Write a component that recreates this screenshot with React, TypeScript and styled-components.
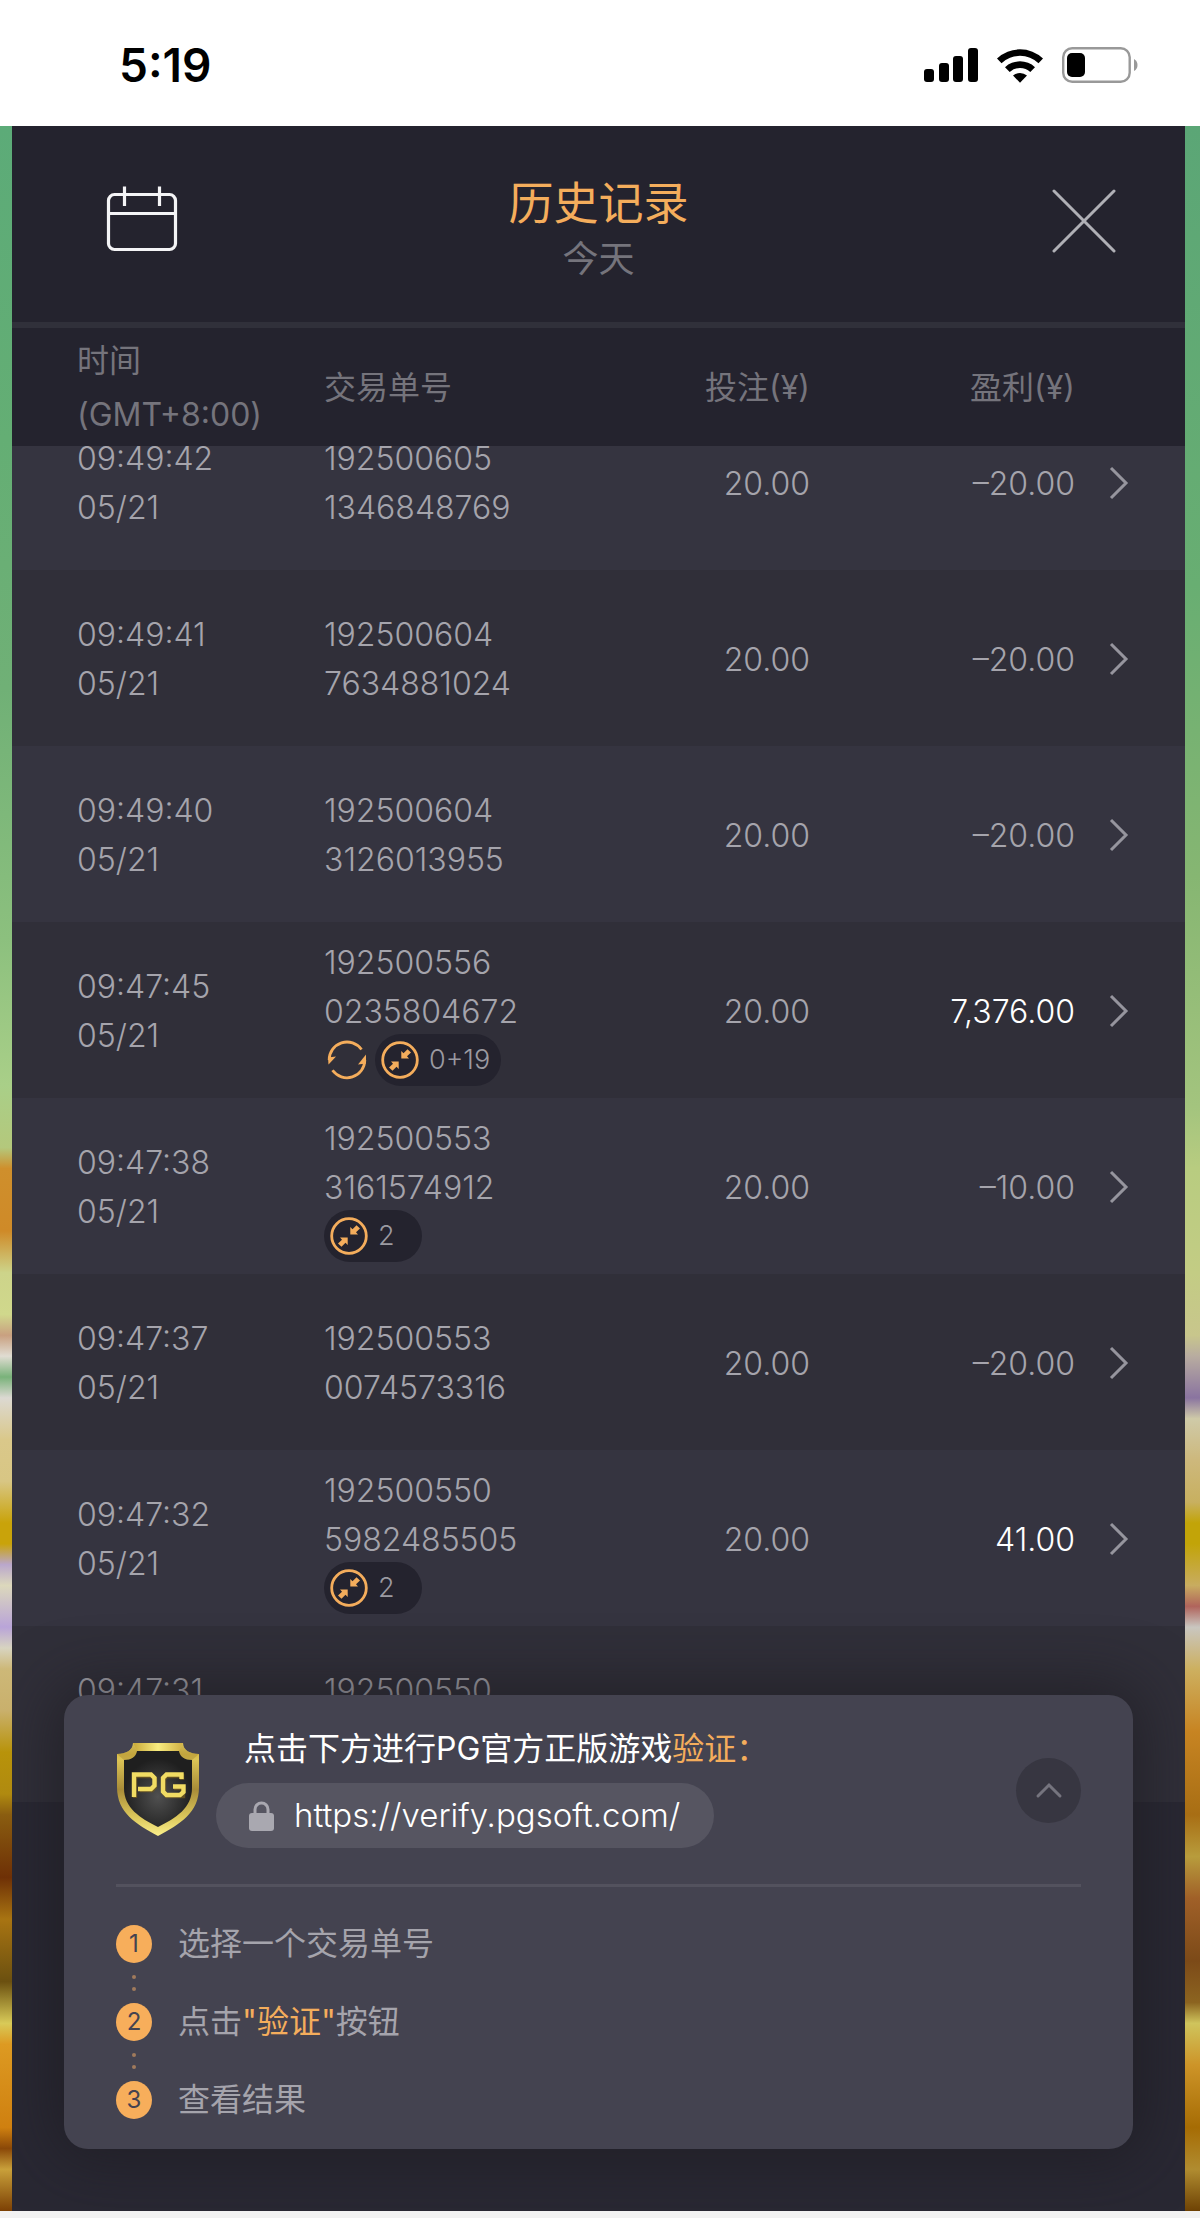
import React from "react";
import styled, { createGlobalStyle } from "styled-components";

const sans = `Inter, "Noto Sans CJK SC", sans-serif`;

const Global = createGlobalStyle`
  * { box-sizing: border-box; }
  body { margin: 0; background: #f2f2f2; font-family: ${sans}; font-weight: 350; color: #a5a4ac; }
  button { font: inherit; color: inherit; border: 0; padding: 0; margin: 0; background: none; display: flex; cursor: pointer; }
  svg { display: block; flex: none; }
`;

const Page = styled.div`
  min-height: 100vh;
  display: flex;
  flex-direction: column;
  padding-bottom: 7px;
`;

const StatusBar = styled.div`
  background: #fff;
  height: 126px;
  display: flex;
  align-items: center;
  justify-content: space-between;
  padding: 4px 62px 0 119px;
`;

const Clock = styled.time`
  color: #000;
  font-size: 46px;
  font-weight: 600;
  line-height: 56px;
`;

const StatusIcons = styled.div`
  display: flex;
  align-items: center;
  gap: 18px;
`;

const Backdrop = styled.div`
  flex: 1;
  display: flex;
  padding: 0 15px 0 12px;
  background:
    linear-gradient(180deg,
      #5cab78 0%, #64ae74 15%, #70b076 27%, #8cc07e 39%, #a9cf88 46%, #b4c87c 49%, #cf8f2c 50%,
      #cf8a28 53%, #cdd48a 55%, #d0d88c 57%, #c9a080 58%, #e0dcd2 59%, #79b27a 60%, #dcd9d2 61%,
      #dac88a 63%, #d8c684 65%, #c9a30a 67%, #c9a30a 68%, #baa7cc 69%, #dcd8bc 70%, #b9a4d8 72%,
      #d8d4c0 73%, #cdb878 74%, #c9b06c 76%, #b8930a 78%, #b08a10 80%, #8a5d10 81%, #6e3006 84%,
      #a87412 86%, #6b5010 89%, #d8ca58 91%, #dd9a22 92%, #cf8010 96%, #8a4808 97%, #c9a03a 98%,
      #7c4004 100%) left / 12px 100% no-repeat,
    linear-gradient(180deg,
      #5ba676 0%, #68ae72 22%, #86b672 36%, #a3c47e 47%, #b8cc80 50%, #c3cc84 55%, #c8c68c 58%,
      #b8aca0 59%, #8a74a0 61%, #cfcaa8 62%, #cdb87c 64%, #c8b060 66%, #c2a408 67%, #c2a408 68%,
      #c8ac60 70%, #b0645c 71%, #c9c6c0 72%, #cdb060 74%, #c78422 77%, #a86e14 81%, #b89c3c 83%,
      #a06028 85%, #7c4a18 88%, #8c6420 90%, #cfc45c 91%, #cd9428 93%, #a66c04 96%, #b08c30 98%,
      #6e4204 100%) right / 15px 100% no-repeat;
`;

const Panel = styled.main`
  flex: 1;
  min-width: 0;
  display: flex;
  flex-direction: column;
  background: #292833;
  overflow: hidden;
`;

const Header = styled.header`
  height: 202px;
  background: #24232e;
  border-bottom: 6px solid #30303a;
  display: grid;
  grid-template-columns: 1fr auto 1fr;
  align-items: start;
  padding: 49px 60px 0;
`;

const Titles = styled.div`
  text-align: center;
`;

const Title = styled.h1`
  margin: 0;
  color: #f4ad5c;
  font-size: 45px;
  font-weight: 400;
  line-height: 58px;
`;

const Subtitle = styled.p`
  margin: 0;
  color: #75747c;
  font-size: 36px;
  font-weight: 400;
  line-height: 52px;
`;

const CalendarButton = styled.button`
  justify-self: start;
  padding: 10px 10px 10px 34px;
`;

const CloseButton = styled.button`
  justify-self: end;
  padding: 14px 9px;
`;

const Table = styled.table`
  width: 100%;
  border-collapse: collapse;
  table-layout: fixed;
`;

const HeadRow = styled.tr`
  height: 118px;
  background: #24232e;
  color: #75747c;
`;

const HeadCell = styled.th<{ $right?: boolean; $first?: boolean; $w?: number }>`
  width: ${(p) => (p.$w ? `${p.$w}px` : "auto")};
  padding: 2px 0 0 ${(p) => (p.$first ? 65 : 0)}px;
  text-align: ${(p) => (p.$right ? "right" : "left")};
  font-size: 32px;
  font-weight: 400;
  line-height: 54px;
  white-space: nowrap;
`;

const Row = styled.tr<{ $lit: boolean; $cut?: boolean }>`
  height: ${(p) => (p.$cut ? 124 : 176)}px;
  background: ${(p) => (p.$lit ? "#353440" : "#302f39")};
`;

const Cell = styled.td<{ $right?: boolean; $first?: boolean; $win?: boolean }>`
  padding: 0 0 0 ${(p) => (p.$first ? 65 : 0)}px;
  text-align: ${(p) => (p.$right ? "right" : "left")};
  color: ${(p) => (p.$win ? "#ffffff" : "inherit")};
  font-size: 32px;
  line-height: 49px;
  vertical-align: middle;
`;

/* The first visible row is scrolled partly under the column titles. */
const Clip = styled.div<{ $cut?: boolean }>`
  height: ${(p) => (p.$cut ? 124 : 176)}px;
  overflow: hidden;
  display: flex;
  flex-direction: column;
  justify-content: flex-end;
`;

const CellBody = styled.div`
  height: 176px;
  flex: none;
  padding-top: 2px;
  display: flex;
  flex-direction: column;
  justify-content: center;
`;

const Tags = styled.div`
  display: flex;
  align-items: center;
  gap: 6px;
  height: 49px;
`;

const Pill = styled.span`
  display: flex;
  align-items: center;
  gap: 10px;
  height: 52px;
  min-width: 98px;
  padding: 0 11px 0 6px;
  border-radius: 26px;
  background: #24232e;
  color: #9b9aa1;
  font-size: 27px;
  line-height: 52px;
`;

const Arrow = styled.button`
  margin: 0 56px 0 auto;
`;

const CardArea = styled.div`
  flex: 1;
  padding: 0 52px 62px;
  margin-top: -107px;
  position: relative;
`;

const Card = styled.section`
  min-height: 454px;
  border-radius: 24px;
  background: #444350;
  box-shadow: 0 0 60px 10px rgba(26, 25, 30, 0.6);
  padding: 32px 52px 24px;
`;

const CardTop = styled.div`
  display: flex;
  align-items: flex-start;
  height: 160px;
  border-bottom: 3px solid #53525e;
`;

const LogoBox = styled.div`
  padding-top: 15px;
  margin-right: 16px;
`;

const VerifyText = styled.div`
  flex: 1;
`;

const VerifyTitle = styled.h2`
  margin: 0;
  padding-left: 28px;
  color: #fff;
  font-size: 32px;
  font-weight: 400;
  line-height: 44px;
  white-space: nowrap;
`;

const Accent = styled.span`
  color: #f4ad5c;
`;

const UrlLink = styled.a`
  display: inline-flex;
  align-items: center;
  gap: 20px;
  height: 65px;
  margin-top: 12px;
  padding: 0 34px 0 33px;
  border-radius: 33px;
  background: #565561;
  color: #fff;
  font-size: 33px;
  line-height: 65px;
  text-decoration: none;
`;

const Collapse = styled.button`
  width: 65px;
  height: 65px;
  margin-top: 31px;
  border-radius: 50%;
  background: #373641;
  align-items: center;
  justify-content: center;
`;

const Steps = styled.ol`
  list-style: none;
  margin: 0;
  padding: 37px 0 0;
`;

const Step = styled.li`
  display: grid;
  grid-template-columns: 36px 1fr;
  column-gap: 26px;
  font-size: 32px;
  font-weight: 400;
  line-height: 40px;
  align-items: center;
`;

const NumDisc = styled.span`
  width: 36px;
  height: 38px;
  border-radius: 50%;
  background: #f7ae5b;
  color: #444350;
  font-size: 24px;
  line-height: 38px;
  text-align: center;
`;

const Dots = styled.span`
  height: 38px;
  display: flex;
  flex-direction: column;
  align-items: center;
  justify-content: center;
  gap: 8px;
  &::before, &::after {
    content: "";
    width: 4px;
    height: 4px;
    border-radius: 50%;
    background: #a07a5c;
  }
`;

const Signal = () => (
  <svg width="54" height="35" viewBox="0 0 54 35" aria-hidden="true">
    <rect x="0" y="21" width="10" height="13" rx="3" />
    <rect x="15" y="15" width="10" height="19" rx="3" />
    <rect x="29" y="8" width="10" height="26" rx="3" />
    <rect x="44" y="0" width="10" height="34" rx="3" />
  </svg>
);

const Wifi = () => (
  <svg width="48" height="35" viewBox="0 0 48 35" aria-hidden="true">
    <path d="M1 10.500A33.500 33.500 0 0 1 47 10.500L42.500 15.200A27 27 0 0 0 5.500 15.200Z" />
    <path d="M9 19.200A22 22 0 0 1 39 19.200L34.300 24A15 15 0 0 0 13.700 24Z" />
    <path d="M17 27.500A11 11 0 0 1 31 27.500L24 34.700Z" />
  </svg>
);

const Battery = () => (
  <svg width="76" height="36" viewBox="0 0 76 36" aria-hidden="true">
    <rect x="1.200" y="1.200" width="66.500" height="33.500" rx="9" fill="none" stroke="#999" strokeWidth="2.400" />
    <rect x="5" y="6" width="18" height="24" rx="5" />
    <path d="M72 12Q75.500 14 75.500 18T72 24Z" fill="#999" />
  </svg>
);

const CalendarIcon = () => (
  <svg width="72" height="68" viewBox="0 0 72 68" fill="none" stroke="#f4f4f6" strokeWidth="3.200" aria-hidden="true">
    <rect x="2.500" y="9.500" width="67" height="55" rx="6" />
    <path d="M2 28.500H70M18.500 1.500V21M53.500 1.500V21" />
  </svg>
);

const CloseIcon = () => (
  <svg width="64" height="64" viewBox="0 0 64 64" stroke="#b0b0b6" strokeWidth="3" strokeLinecap="round" aria-hidden="true">
    <path d="M2 2L62 62M62 2L2 62" />
  </svg>
);

const Chevron = () => (
  <svg width="20" height="36" viewBox="0 0 20 36" fill="none" stroke="#96959e" strokeWidth="3" aria-hidden="true">
    <path d="M2 3L17 18L2 33" />
  </svg>
);

const SpinIcon = () => (
  <svg width="45" height="42" viewBox="0 0 45 42" fill="none" stroke="#f4ad5c" strokeWidth="2.800" aria-hidden="true">
    <path d="M37.500 10.500A17.800 17.800 0 0 0 5.200 21" />
    <path d="M8.500 31.300A17.800 17.800 0 0 0 40.800 21" />
    <path d="M4.500 25.500L4 18.500L12 17.500Z" fill="#f4ad5c" stroke="none" />
    <path d="M42 15.500L34 25.500L42 24.500Z" fill="#f4ad5c" stroke="none" />
  </svg>
);

const MultiIcon = () => (
  <svg width="38" height="38" viewBox="0 0 38 38" fill="#f4ad5c" aria-hidden="true">
    <circle cx="19" cy="19" r="17.300" fill="none" stroke="#f4ad5c" strokeWidth="2.800" />
    <path d="M20.300 10V17.500H28L26 15.300L30 11.500L26.500 8.200L22.500 12.200Z" />
    <path d="M17.700 28V20.500H10L12 22.700L8 26.500L11.500 29.800L15.500 25.800Z" />
  </svg>
);

const LockIcon = () => (
  <svg width="25" height="30" viewBox="0 0 25 30" aria-hidden="true">
    <path d="M6 14V8.500a6.500 6.500 0 0 1 13 0V14" fill="none" stroke="#a9a8b0" strokeWidth="3" />
    <rect x="0" y="12" width="25" height="18" rx="3" fill="#a9a8b0" />
  </svg>
);

const UpIcon = () => (
  <svg width="28" height="18" viewBox="0 0 28 18" fill="none" stroke="#75747e" strokeWidth="3" strokeLinecap="round" aria-hidden="true">
    <path d="M3 14L14 3L25 14" />
  </svg>
);

const Shield = () => (
  <svg width="84" height="94" viewBox="0 0 84 94" role="img" aria-label="PG">
    <defs>
      <linearGradient id="rim" x1="0" y1="0" x2="0" y2="1">
        <stop offset="0" stopColor="#f6e878" />
        <stop offset="0.120" stopColor="#d8bc48" />
        <stop offset="0.180" stopColor="#dcc456" />
        <stop offset="0.500" stopColor="#a88c38" />
        <stop offset="0.800" stopColor="#dcc85c" />
        <stop offset="1" stopColor="#fbf08c" />
      </linearGradient>
      <linearGradient id="rimTop" x1="0" y1="0" x2="1" y2="0">
        <stop offset="0" stopColor="#c8a838" />
        <stop offset="0.500" stopColor="#f8ec80" />
        <stop offset="1" stopColor="#d0b044" />
      </linearGradient>
      <radialGradient id="core" cy="0.600">
        <stop offset="0" stopColor="#505050" />
        <stop offset="1" stopColor="#1f1f1f" />
      </radialGradient>
    </defs>
    <path fill="url(#rim)" d="M17 1H67C67 8 74 12 83 12V45C83 71 64 82 42 94C20 82 1 71 1 45V12C10 12 17 8 17 1Z" />
    <path fill="url(#rimTop)" d="M17 1H67L63 9H21Z" />
    <path fill="#a88a30" d="M67 1C67 8 74 12 83 12L76 18C69 18 64 15 63 9ZM17 1C17 8 10 12 1 12L8 18C15 18 20 15 21 9Z" opacity="0.450" />
    <path fill="url(#core)" d="M21 9H63C64 15 69 18 76 18V46C76 66 60 76 42 85C24 76 8 66 8 46V18C15 18 20 15 21 9Z" />
    <g fill="none" stroke="#6e5820" strokeWidth="4.400" opacity="0.800">
      <path d="M19 56V34H36L39 37V45L36 48H24" />
      <path d="M66 38V34H51L48 37V51L51 54H67V46H58" />
    </g>
    <g fill="none" stroke="#f1dc63" strokeWidth="4.400">
      <path d="M18 55V32.500H35L38.500 36V43.500L35 47H22" />
      <path d="M65.500 37V32.500H50.500L47 36V49.500L50.500 53H64L67.500 50V44.500H57" />
    </g>
  </svg>
);

type Entry = {
  time: string;
  id: [string, string];
  profit: string;
  spin?: boolean;
  multi?: string;
};

const entries: Entry[] = [
  { time: "09:49:42", id: ["192500605", "1346848769"], profit: "–20.00" },
  { time: "09:49:41", id: ["192500604", "7634881024"], profit: "–20.00" },
  { time: "09:49:40", id: ["192500604", "3126013955"], profit: "–20.00" },
  { time: "09:47:45", id: ["192500556", "0235804672"], profit: "7,376.00", spin: true, multi: "0+19" },
  { time: "09:47:38", id: ["192500553", "3161574912"], profit: "–10.00", multi: "2" },
  { time: "09:47:37", id: ["192500553", "0074573316"], profit: "–20.00" },
  { time: "09:47:32", id: ["192500550", "5982485505"], profit: "41.00", multi: "2" },
];

const History = () => (
  <Table>
    <thead>
      <HeadRow>
        <HeadCell $first $w={312}>时间<br />(GMT+8:00)</HeadCell>
        <HeadCell>交易单号</HeadCell>
        <HeadCell $right $w={200}>投注(¥)</HeadCell>
        <HeadCell $right $w={265}>盈利(¥)</HeadCell>
        <HeadCell $w={110} aria-label="详情" />
      </HeadRow>
    </thead>
    <tbody>
      {entries.map((e, i) => {
        const cut = i === 0;
        return (
          <Row key={e.time} $lit={i % 2 === 0} $cut={cut}>
            <Cell $first>
              <Clip $cut={cut}><CellBody><span>{e.time}</span><span>05/21</span></CellBody></Clip>
            </Cell>
            <Cell>
              <Clip $cut={cut}>
                <CellBody>
                  <span>{e.id[0]}</span>
                  <span>{e.id[1]}</span>
                  {e.multi && (
                    <Tags>
                      {e.spin && <SpinIcon />}
                      <Pill><MultiIcon />{e.multi}</Pill>
                    </Tags>
                  )}
                </CellBody>
              </Clip>
            </Cell>
            <Cell $right><Clip $cut={cut}><CellBody>20.00</CellBody></Clip></Cell>
            <Cell $right $win={!e.profit.startsWith("–")}><Clip $cut={cut}><CellBody>{e.profit}</CellBody></Clip></Cell>
            <Cell><Clip $cut={cut}><CellBody><Arrow aria-label="查看"><Chevron /></Arrow></CellBody></Clip></Cell>
          </Row>
        );
      })}
      <Row $lit={false}>
        <Cell $first><CellBody><span>09:47:31</span><span>&nbsp;</span></CellBody></Cell>
        <Cell><CellBody><span>192500550</span><span>&nbsp;</span></CellBody></Cell>
        <Cell colSpan={3} />
      </Row>
    </tbody>
  </Table>
);

export default function App() {
  return (
    <Page>
      <Global />
      <StatusBar>
        <Clock>5:19</Clock>
        <StatusIcons><Signal /><Wifi /><Battery /></StatusIcons>
      </StatusBar>
      <Backdrop>
        <Panel>
          <Header>
            <CalendarButton aria-label="选择日期"><CalendarIcon /></CalendarButton>
            <Titles>
              <Title>历史记录</Title>
              <Subtitle>今天</Subtitle>
            </Titles>
            <CloseButton aria-label="关闭"><CloseIcon /></CloseButton>
          </Header>
          <History />
          <CardArea>
            <Card>
              <CardTop>
                <LogoBox><Shield /></LogoBox>
                <VerifyText>
                  <VerifyTitle>点击下方进行PG官方正版游戏<Accent>验证：</Accent></VerifyTitle>
                  <UrlLink href="https://verify.pgsoft.com/"><LockIcon />https://verify.pgsoft.com/</UrlLink>
                </VerifyText>
                <Collapse aria-label="收起"><UpIcon /></Collapse>
              </CardTop>
              <Steps>
                <Step><NumDisc>1</NumDisc><span>选择一个交易单号</span></Step>
                <Step aria-hidden="true"><Dots /></Step>
                <Step><NumDisc>2</NumDisc><span>点击<Accent>"验证"</Accent>按钮</span></Step>
                <Step aria-hidden="true"><Dots /></Step>
                <Step><NumDisc>3</NumDisc><span>查看结果</span></Step>
              </Steps>
            </Card>
          </CardArea>
        </Panel>
      </Backdrop>
    </Page>
  );
}
